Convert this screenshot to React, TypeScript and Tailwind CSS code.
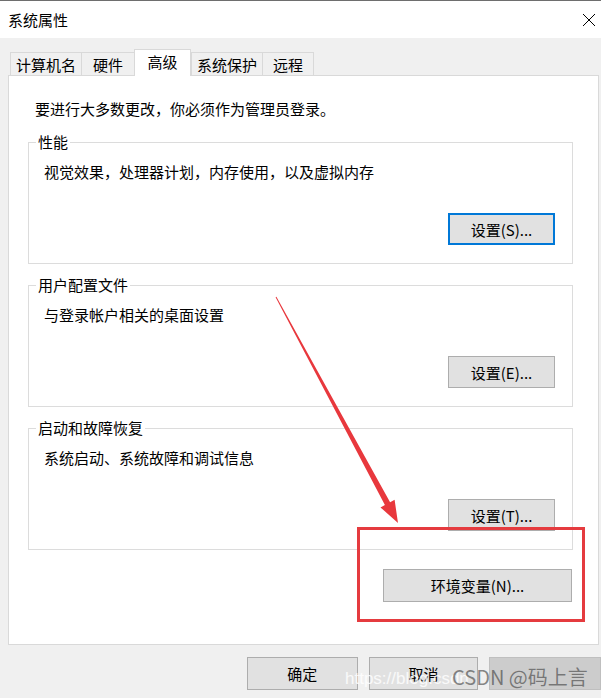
import React from 'react';

const font = { fontFamily: '"Noto Sans CJK SC", "Noto Sans", sans-serif' };

function Btn({ label, focused, className = '' }: { label: string; focused?: boolean; className?: string }) {
  return (
    <div
      className={
        'flex items-center justify-center bg-[#e1e1e1] text-[15px] leading-none text-black ' +
        (focused ? 'border-2 border-[#0078d7] ' : 'border border-[#adadad] ') +
        className
      }
    >
      {label}
    </div>
  );
}

function Group({ title, desc, btn, focused, className = '' }: { title: string; desc: string; btn: string; focused?: boolean; className?: string }) {
  return (
    <fieldset className={'flex flex-col border border-[#dcdcdc] pb-[18px] ' + className}>
      <legend className="ml-[7px] px-[2px] text-[15px] leading-[20px]">{title}</legend>
      <div className="mt-[10px] pl-[15px] text-[15px] leading-[20px]">{desc}</div>
      <Btn label={btn} focused={focused} className="mt-[31px] mr-[17px] h-[32px] w-[107px] self-end" />
    </fieldset>
  );
}

const tabs = [
  { name: '计算机名', w: 'w-[71px]' },
  { name: '硬件', w: 'w-[53px]' },
  { name: '高级', w: 'w-[57px]', active: true },
  { name: '系统保护', w: 'w-[71px]' },
  { name: '远程', w: 'w-[52px]' },
];

export default function App() {
  return (
    <div className="relative h-[698px] w-[601px] overflow-hidden bg-[#f0f0f0] text-black" style={font}>
      {/* title bar */}
      <div className="flex h-[38px] items-center justify-between border-t border-[#6e6e6e] bg-white pl-[8px] pr-[5px]">
        <span className="text-[15px] leading-none">系统属性</span>
        <svg width="14" height="14" viewBox="0 0 14 14">
          <path d="M1 1 L13 13 M13 1 L1 13" stroke="#000" strokeWidth="1" fill="none" />
        </svg>
      </div>

      {/* tabs */}
      <div className="ml-[10px] mt-[11px] flex h-[26px] items-end">
        {tabs.map((t, i) =>
          t.active ? (
            <div
              key={t.name}
              className={'relative z-10 mb-[-1px] flex h-[27px] items-start justify-center border-x border-t border-[#d9d9d9] bg-white pt-[1px] text-[15px] leading-[22px] ' + t.w}
            >
              {t.name}
            </div>
          ) : (
            <div
              key={t.name}
              className={
                'flex h-[23px] items-center justify-center border-t border-l border-[#d9d9d9] bg-[#f0f0f0] text-[15px] leading-none ' +
                (i === tabs.length - 1 ? 'border-r ' : '') +
                t.w
              }
            >
              {t.name}
            </div>
          )
        )}
      </div>

      {/* tab panel */}
      <div className="ml-[8px] flex h-[570px] w-[591px] flex-col border border-[#d9d9d9] bg-white pl-[19px] pr-[25px] pt-[23px]">
        <div className="ml-[7px] text-[15px] leading-[20px]">要进行大多数更改，你必须作为管理员登录。</div>
        <Group className="mt-[13px]" title="性能" desc="视觉效果，处理器计划，内存使用，以及虚拟内存" btn="设置(S)..." focused />
        <Group className="mt-[11px]" title="用户配置文件" desc="与登录帐户相关的桌面设置" btn="设置(E)..." />
        <Group className="mt-[11px]" title="启动和故障恢复" desc="系统启动、系统故障和调试信息" btn="设置(T)..." />
        <Btn label="环境变量(N)..." className="mr-[1px] mt-[19px] h-[33px] w-[189px] self-end" />
      </div>

      {/* dialog buttons */}
      <div className="ml-[247px] mt-[12px] flex gap-[11px]">
        <Btn label="确定" className="h-[33px] w-[111px]" />
        <Btn label="取消" className="h-[33px] w-[110px]" />
        <div className="h-[33px] w-[112px] border border-[#bfbfbf] bg-[#cccccc]" />
      </div>

      {/* annotation overlay */}
      <div className="pointer-events-none absolute left-[357px] top-[527px] h-[95px] w-[228px] border-[3px] border-[#e53b3f]" />
      <svg className="pointer-events-none absolute left-0 top-0" width="601" height="698" viewBox="0 0 601 698">
        <polygon
          points="276.4,296.8 390.1,502.2 394.6,499.8 398,523 380.5,507.4 384.9,505 275.6,297.2"
          fill="#e8383d"
        />
      </svg>

      {/* watermark */}
      <div
        className="pointer-events-none absolute left-[345px] top-[668px] whitespace-nowrap text-[17px] leading-[22px] text-white/80"
        style={{ fontFamily: '"Liberation Sans", sans-serif' }}
      >
        https://blog.csdn
      </div>
      <div className="pointer-events-none absolute left-[452px] top-[664px] whitespace-nowrap text-[20px] leading-[26px] text-[#3c3c3c]/60">
        CSDN @码上言
      </div>
    </div>
  );
}
